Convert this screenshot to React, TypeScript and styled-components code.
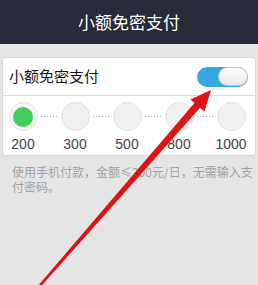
import React from 'react'
import styled, { createGlobalStyle } from 'styled-components'

const GlobalStyle = createGlobalStyle`
  html, body {
    margin: 0;
    padding: 0;
    background: #e5e5e5;
  }
  body {
    font-family: "Liberation Sans", "Noto Sans CJK SC", sans-serif;
  }
`;

const Screen = styled.div`
  position: relative;
  width: 258px;
  height: 285px;
  overflow: hidden;
  background: #e5e5e5;
`;

const Header = styled.div`
  height: 44px;
  background: #272a38;
  color: #fff;
  display: flex;
  align-items: center;
  justify-content: center;
  font-size: 17px;
  line-height: 20px;
  font-family: "Noto Sans CJK SC", sans-serif;
`;

const Content = styled.div`
  padding: 13px 2px 0 2px;
`;

const Card = styled.div`
  background: #fff;
  border: 1px solid #d9d9d9;
  border-radius: 4px;
`;

const TitleRow = styled.div`
  height: 37px;
  display: flex;
  align-items: center;
  justify-content: space-between;
  padding: 0 7px 0 6px;
  border-bottom: 1px solid #dcdcdc;
`;

const CardTitle = styled.span`
  font-family: "Noto Sans CJK SC", sans-serif;
  font-size: 15px;
  line-height: 18px;
  color: #151515;
  margin-top: -2px;
`;

const Track = styled.div<{ $on: boolean }>`
  width: 51px;
  height: 20px;
  border-radius: 10px;
  background: ${p => (p.$on ? '#38a6df' : '#d0d0d0')};
  display: flex;
  align-items: center;
  justify-content: ${p => (p.$on ? 'flex-end' : 'flex-start')};
`;

const Knob = styled.div`
  width: 30px;
  height: 19px;
  box-sizing: border-box;
  border-radius: 10px;
  border: 1px solid #c9c9c9;
  background: linear-gradient(#ffffff, #e8e8e8);
`;

const AmountRow = styled.div`
  display: flex;
  align-items: flex-start;
  padding: 6px 9px 3px 5px;
`;

const Step = styled.div`
  width: 30px;
  display: flex;
  flex-direction: column;
  align-items: center;
`;

const Circle = styled.div<{ $active: boolean }>`
  width: 29px;
  height: 29px;
  box-sizing: border-box;
  border-radius: 50%;
  background: ${p => (p.$active ? '#f7f7f7' : '#f1f1f1')};
  border: 1px solid #e0e0e0;
  display: flex;
  align-items: center;
  justify-content: center;
`;

const Dot = styled.div`
  width: 20px;
  height: 20px;
  border-radius: 50%;
  background: #43cd5c;
`;

const StepLabel = styled.span`
  margin-top: 5px;
  font-size: 14px;
  line-height: 16px;
  color: #444;
`;

const Connector = styled.div`
  flex: 1;
  height: 29px;
  display: flex;
  align-items: center;
  padding: 0 3px;

  &::after {
    content: '';
    flex: 1;
    height: 1px;
    background: repeating-linear-gradient(to right, #a8a8a8 0 1px, transparent 1px 3px);
  }
`;

const Note = styled.p`
  margin: 8px 0 0 0;
  padding: 0 2px 0 10px;
  font-family: "Noto Sans CJK SC", sans-serif;
  font-size: 12px;
  line-height: 15px;
  color: #a2a2a2;
`;

const ArrowLayer = styled.svg`
  position: absolute;
  left: 0;
  top: 0;
  pointer-events: none;
`;

const amounts = [200, 300, 500, 800, 1000];

const App = () => {
  const selected = 0;
  return (
    <Screen>
      <GlobalStyle />
      <Header>小额免密支付</Header>
      <Content>
        <Card>
          <TitleRow>
            <CardTitle>小额免密支付</CardTitle>
            <Track $on>
              <Knob />
            </Track>
          </TitleRow>
          <AmountRow>
            {amounts.map((a, i) => (
              <React.Fragment key={a}>
                {i > 0 && <Connector />}
                <Step>
                  <Circle $active={i === selected}>{i === selected && <Dot />}</Circle>
                  <StepLabel>{a}</StepLabel>
                </Step>
              </React.Fragment>
            ))}
          </AmountRow>
        </Card>
        <Note>使用手机付款，金额≤200元/日，无需输入支付密码。</Note>
      </Content>
      <ArrowLayer width="258" height="285" viewBox="0 0 258 285">
        <polygon points="37,287 39.5,288 203,104.5 197.5,99.5" fill="#e01212" />
        <polygon points="211,90 190.5,99.5 204.5,111.5" fill="#e01212" />
      </ArrowLayer>
    </Screen>
  )
}

export default App
